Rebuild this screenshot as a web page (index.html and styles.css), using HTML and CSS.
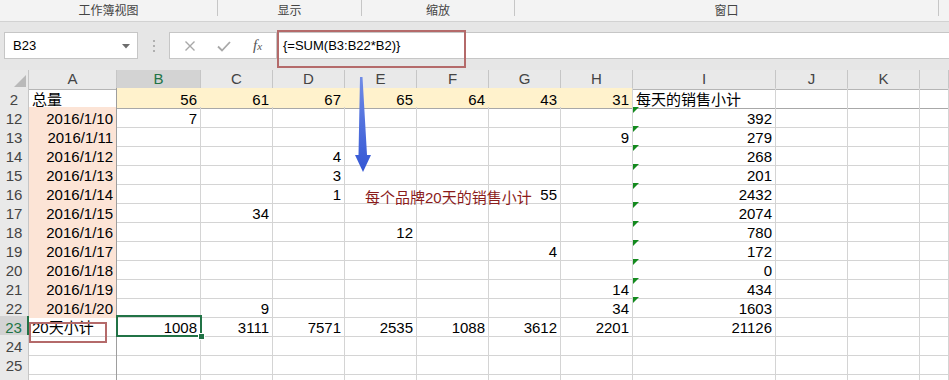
FILE: index.html
```html
<!DOCTYPE html>
<html lang="zh">
<head>
    <meta charset="UTF-8">
    <title>销售小计</title>
    <link rel="stylesheet" href="styles.css">
</head>
<body>
    <div class="ribbon">
        <div class="group g1">工作簿视图</div>
        <div class="group g2">显示</div>
        <div class="group g3">缩放</div>
        <div class="group g4">窗口</div>
    </div>

    <div class="toolbar">
        <div class="namebox">
            <span>B23</span>
            <svg class="caret" width="8" height="5" viewBox="0 0 8 5"><path d="M0 0h8L4 4.5z" fill="#6d6d6d"/></svg>
        </div>
        <svg class="grip" width="4" height="14" viewBox="0 0 4 14"><rect x="1" y="1" width="2" height="2" fill="#b0b0b0"/><rect x="1" y="6" width="2" height="2" fill="#b0b0b0"/><rect x="1" y="11" width="2" height="2" fill="#b0b0b0"/></svg>
        <div class="fbox">
            <svg class="ficon" width="12" height="12" viewBox="0 0 12 12"><path d="M1.5 1.5l9 9M10.5 1.5l-9 9" stroke="#a8a8a8" stroke-width="1.4"/></svg>
            <svg class="ficon" width="14" height="12" viewBox="0 0 14 12"><path d="M1 6.5l4 4L13 2" stroke="#a8a8a8" stroke-width="1.8" fill="none"/></svg>
            <span class="fx"><i>f</i><i class="sub">x</i></span>
            <div class="finput">{=SUM(B3:B22*B2)}</div>
        </div>
    </div>

    <div class="sheet">
        <div class="row top">
            <div class="c ch corner"><svg width="12" height="12" viewBox="0 0 12 12"><path d="M12 0v12H0z" fill="#b9b9b9"/></svg></div>
            <div class="c ch">A</div><div class="c ch cur">B</div><div class="c ch">C</div><div class="c ch">D</div><div class="c ch">E</div><div class="c ch">F</div><div class="c ch">G</div><div class="c ch">H</div><div class="c ch">I</div><div class="c ch">J</div><div class="c ch">K</div><div class="c ch"></div>
        </div>
        <div class="row frz">
            <div class="c rh">2</div><div class="c a">总量</div><div class="c n y">56</div><div class="c n y">61</div><div class="c n y">67</div><div class="c n y">65</div><div class="c n y">64</div><div class="c n y">43</div><div class="c n y ye">31</div><div class="c">每天的销售小计</div><div class="c"></div><div class="c"></div><div class="c"></div>
        </div>
        <div class="row">
            <div class="c rh">12</div><div class="c a d n">2016/1/10</div><div class="c n">7</div><div class="c"></div><div class="c"></div><div class="c"></div><div class="c"></div><div class="c"></div><div class="c"></div><div class="c n e">392</div><div class="c"></div><div class="c"></div><div class="c"></div>
        </div>
        <div class="row">
            <div class="c rh">13</div><div class="c a d n">2016/1/11</div><div class="c"></div><div class="c"></div><div class="c"></div><div class="c"></div><div class="c"></div><div class="c"></div><div class="c n">9</div><div class="c n e">279</div><div class="c"></div><div class="c"></div><div class="c"></div>
        </div>
        <div class="row">
            <div class="c rh">14</div><div class="c a d n">2016/1/12</div><div class="c"></div><div class="c"></div><div class="c n">4</div><div class="c"></div><div class="c"></div><div class="c"></div><div class="c"></div><div class="c n e">268</div><div class="c"></div><div class="c"></div><div class="c"></div>
        </div>
        <div class="row">
            <div class="c rh">15</div><div class="c a d n">2016/1/13</div><div class="c"></div><div class="c"></div><div class="c n">3</div><div class="c"></div><div class="c"></div><div class="c"></div><div class="c"></div><div class="c n e">201</div><div class="c"></div><div class="c"></div><div class="c"></div>
        </div>
        <div class="row">
            <div class="c rh">16</div><div class="c a d n">2016/1/14</div><div class="c"></div><div class="c"></div><div class="c n">1</div><div class="c"></div><div class="c"></div><div class="c n">55</div><div class="c"></div><div class="c n e">2432</div><div class="c"></div><div class="c"></div><div class="c"></div>
        </div>
        <div class="row">
            <div class="c rh">17</div><div class="c a d n">2016/1/15</div><div class="c"></div><div class="c n">34</div><div class="c"></div><div class="c"></div><div class="c"></div><div class="c"></div><div class="c"></div><div class="c n e">2074</div><div class="c"></div><div class="c"></div><div class="c"></div>
        </div>
        <div class="row">
            <div class="c rh">18</div><div class="c a d n">2016/1/16</div><div class="c"></div><div class="c"></div><div class="c"></div><div class="c n">12</div><div class="c"></div><div class="c"></div><div class="c"></div><div class="c n e">780</div><div class="c"></div><div class="c"></div><div class="c"></div>
        </div>
        <div class="row">
            <div class="c rh">19</div><div class="c a d n">2016/1/17</div><div class="c"></div><div class="c"></div><div class="c"></div><div class="c"></div><div class="c"></div><div class="c n">4</div><div class="c"></div><div class="c n e">172</div><div class="c"></div><div class="c"></div><div class="c"></div>
        </div>
        <div class="row">
            <div class="c rh">20</div><div class="c a d n">2016/1/18</div><div class="c"></div><div class="c"></div><div class="c"></div><div class="c"></div><div class="c"></div><div class="c"></div><div class="c"></div><div class="c n e">0</div><div class="c"></div><div class="c"></div><div class="c"></div>
        </div>
        <div class="row">
            <div class="c rh">21</div><div class="c a d n">2016/1/19</div><div class="c"></div><div class="c"></div><div class="c"></div><div class="c"></div><div class="c"></div><div class="c"></div><div class="c n">14</div><div class="c n e">434</div><div class="c"></div><div class="c"></div><div class="c"></div>
        </div>
        <div class="row">
            <div class="c rh">22</div><div class="c a d n">2016/1/20</div><div class="c"></div><div class="c n">9</div><div class="c"></div><div class="c"></div><div class="c"></div><div class="c"></div><div class="c n">34</div><div class="c n e">1603</div><div class="c"></div><div class="c"></div><div class="c"></div>
        </div>
        <div class="row">
            <div class="c rh cur">23</div><div class="c a total">20天小计</div><div class="c n sel">1008</div><div class="c n">3111</div><div class="c n">7571</div><div class="c n">2535</div><div class="c n">1088</div><div class="c n">3612</div><div class="c n">2201</div><div class="c n">21126</div><div class="c"></div><div class="c"></div><div class="c"></div>
        </div>
        <div class="row">
            <div class="c rh">24</div><div class="c a"></div><div class="c"></div><div class="c"></div><div class="c"></div><div class="c"></div><div class="c"></div><div class="c"></div><div class="c"></div><div class="c"></div><div class="c"></div><div class="c"></div><div class="c"></div>
        </div>
        <div class="row">
            <div class="c rh">25</div><div class="c a"></div><div class="c"></div><div class="c"></div><div class="c"></div><div class="c"></div><div class="c"></div><div class="c"></div><div class="c"></div><div class="c"></div><div class="c"></div><div class="c"></div><div class="c"></div>
        </div>
        <div class="row">
            <div class="c rh"></div><div class="c a"></div><div class="c"></div><div class="c"></div><div class="c"></div><div class="c"></div><div class="c"></div><div class="c"></div><div class="c"></div><div class="c"></div><div class="c"></div><div class="c"></div><div class="c"></div>
        </div>
    </div>

    <!-- annotations drawn over the sheet -->
    <div class="mark mark-formula"></div>
    <div class="mark mark-total"></div>
    <svg class="arrow" width="20" height="100" viewBox="0 0 20 100">
        <defs>
            <linearGradient id="ag" x1="0" y1="0" x2="0" y2="1">
                <stop offset="0" stop-color="#6f8be6"/>
                <stop offset="1" stop-color="#3356d4"/>
            </linearGradient>
        </defs>
        <path d="M5 0h2.5L12 78h4L8 95 0 78h3.5z" fill="url(#ag)"/>
    </svg>
    <div class="note">每个品牌20天的销售小计</div>
</body>
</html>
```

FILE: styles.css
```css
html, body { margin: 0; padding: 0; }
body { width: 949px; height: 380px; overflow: hidden; position: relative; background-color: #e6e6e6; font-family: "Liberation Sans", "Noto Sans CJK SC", sans-serif; color: #000; }

.ribbon { display: flex; height: 21px; background-color: #f3f3f3; border-bottom: 1px solid #d2d2d2; font-size: 12px; color: #444; }
.group { height: 16px; line-height: 22px; text-align: center; border-right: 1px solid #c6c6c6; box-sizing: border-box; white-space: nowrap; }
.g1 { width: 218px; }
.g2 { width: 144px; }
.g3 { width: 153px; }
.g4 { width: 424px; }

.toolbar { display: flex; align-items: center; height: 27px; padding: 10px 0 11px 4px; }
.namebox { width: 134px; height: 27px; box-sizing: border-box; border: 1px solid #c6c6c6; background-color: #fff; display: flex; align-items: center; justify-content: space-between; padding: 0 7px 0 8px; font-size: 13px; }
.caret { margin-top: 1px; }
.grip { margin: 0 13px 0 14px; }
.fbox { flex: 1; height: 27px; box-sizing: border-box; border: 1px solid #c6c6c6; border-right: none; background-color: #fff; display: flex; align-items: center; }
.ficon { margin-left: 14px; }
.ficon + .ficon { margin-left: 21px; }
.fx { margin-left: 22px; font-family: "Liberation Serif", serif; font-size: 15px; color: #555; width: 18px; }
.fx .sub { font-size: 11px; }
.finput { flex: 1; height: 25px; line-height: 25px; margin-left: 5px; padding-left: 6px; border-left: 1px solid #c6c6c6; font-size: 13px; }

.sheet { background-color: #fff; }
.row { display: grid; grid-template-columns: 29px 88px 84px repeat(6, 72px) 143px 72px 72px 1fr; height: 19px; }
.row.top { height: 18px; }
.c { box-sizing: border-box; border-right: 1px solid #d4d4d4; border-bottom: 1px solid #d4d4d4; padding: 3px 3px 0; line-height: 17px; font-size: 15px; white-space: nowrap; position: relative; }
.n { text-align: right; }

.ch { background-color: #e9e9e9; border-right-color: #c6c6c6; border-bottom-color: #b5b5b5; padding: 0; line-height: 18px; text-align: center; color: #444; }
.ch.cur { background-color: #d3d3d3; color: #217346; border-bottom: 2px solid #217346; }
.corner { display: flex; align-items: flex-end; justify-content: flex-end; padding: 0 2px 2px 0; }
.corner svg { display: block; }

.rh { background-color: #e9e9e9; border-right-color: #c6c6c6; border-bottom-color: #d4d4d4; padding: 3px 0 0; text-align: center; color: #444; }
.rh.cur { background-color: #d3d3d3; color: #217346; border-right: 2px solid #217346; }

.a { border-right-color: #9e9e9e; }
.frz .c { border-bottom-color: #a8a8a8; }
.y { background-color: #fff2cc; border-right-color: #fff2cc; }
.y.ye { border-right-color: #d4d4d4; }
.d { background-color: #fce4d6; border-bottom-color: #fce4d6; }

.e::before { content: ""; position: absolute; left: 0; top: 0; border-top: 6px solid #138a1e; border-right: 6px solid transparent; }

.sel { z-index: 1; }
.sel::after { content: ""; position: absolute; left: -1px; top: -1px; right: -2px; bottom: -1px; border: 2px solid #217346; }
.sel::before { content: ""; position: absolute; right: -5px; bottom: -4px; width: 5px; height: 5px; background-color: #217346; border: 1px solid #fff; z-index: 2; }

.mark { position: absolute; border: 2px solid #b46a6a; box-sizing: border-box; }
.mark-formula { left: 277px; top: 30px; width: 189px; height: 38px; }
.mark-total { left: 29px; top: 322px; width: 78px; height: 21px; }
.arrow { position: absolute; left: 355px; top: 77px; }
.note { position: absolute; left: 365px; top: 189px; font-size: 15px; line-height: 18px; color: #8b1c1c; white-space: nowrap; }
```
